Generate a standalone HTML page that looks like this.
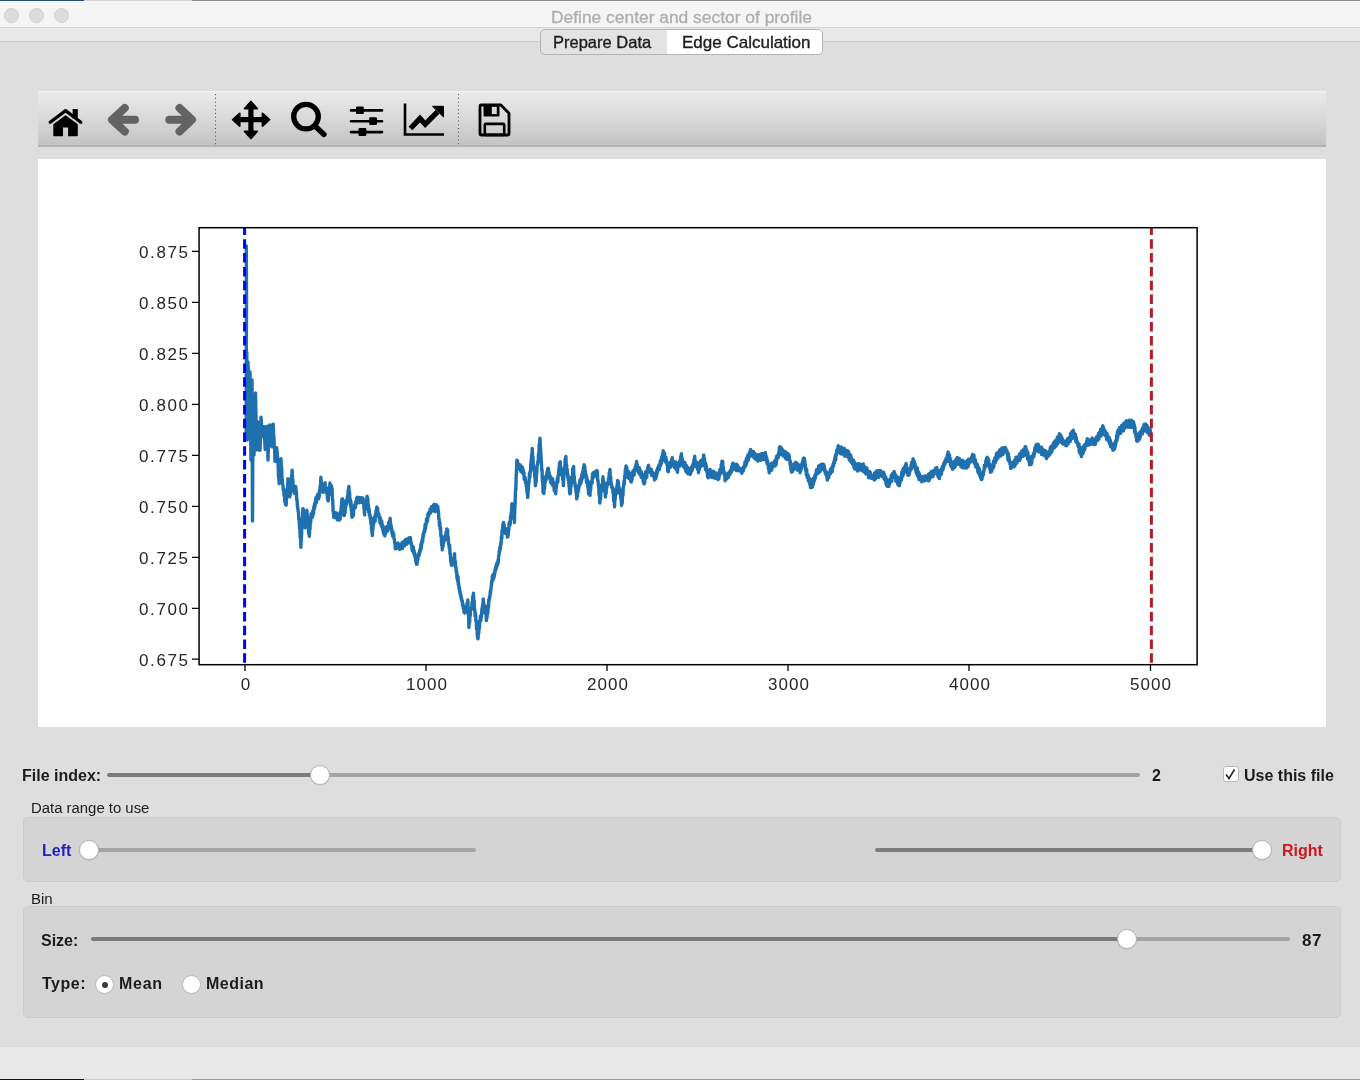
<!DOCTYPE html>
<html><head><meta charset="utf-8">
<style>
*{margin:0;padding:0;box-sizing:border-box}
html,body{width:1360px;height:1080px;overflow:hidden;background:#dedede;font-family:"Liberation Sans",sans-serif;color:#1c1c1c}
.abs{position:absolute}
.t{position:absolute;white-space:nowrap;line-height:1;will-change:transform}
#topstripe{left:0;top:0;width:1360px;height:1px;background:#8e8e8e}
#titlebar{left:0;top:1px;width:1360px;height:27px;background:#f5f5f5;border-bottom:1px solid #d3d3d3}
.light{position:absolute;top:8px;width:15px;height:15px;border-radius:50%;background:#dcdcdc;border:1px solid #cfcfcf}
#band{left:0;top:28px;width:1360px;height:14px;background:#e8e8e8;border-bottom:1px solid #cdcdcd}
#tabs{left:540px;top:29px;width:283px;height:26px;border:1px solid #b3b3b3;border-radius:5px;background:#e3e3e3;overflow:hidden}
#tabsel{position:absolute;left:126px;top:0;width:160px;height:26px;background:#fff}
#toolbar{left:38px;top:91px;width:1288px;height:56px;background:linear-gradient(#f6f6f6 0px,#eaeaea 2px,#d8d8d8 28px,#c3c3c3 54px);border-bottom:2px solid #b2b2b2}
.sep{position:absolute;top:3px;width:1px;height:50px;background:repeating-linear-gradient(#606060 0 1px,transparent 1px 3.75px)}
#canvas{left:38px;top:159px;width:1288px;height:568px;background:#fff}
.track{position:absolute;height:4px;border-radius:2px;background:#a4a4a4}
.trackd{position:absolute;height:4px;border-radius:2px;background:#7b7b7b}
.knob{position:absolute;width:20px;height:20px;border-radius:50%;background:#fff;border:1px solid #b5b5b5;box-shadow:0 0.5px 1px rgba(0,0,0,0.15)}
.group{position:absolute;background:#d4d4d4;border:1px solid #cbcbcb;border-radius:5px}
.lab{font-size:16px;font-weight:bold;color:#1c1c1c}
#status{left:0;top:1046px;width:1360px;height:33px;background:#e8e8e8;border-top:1px solid #d9d9d9}
#botstripe{left:0;top:1079px;width:1360px;height:1px;background:#9a9a9a}
.tick{font-size:17px;color:#262626;letter-spacing:1.1px}
.xt{transform:translateX(-50%)}
.yt{letter-spacing:1.6px}
</style></head><body>
<div id="topstripe" class="abs"><div class="abs" style="left:0;top:0;width:84px;height:2px;background:#23507d"></div><div class="abs" style="left:84px;top:0;width:108px;height:1px;background:#d4d4d4"></div></div>
<div id="titlebar" class="abs"></div>
<div class="light" style="left:4px"></div>
<div class="light" style="left:29px"></div>
<div class="light" style="left:54px"></div>
<div class="t" style="left:550.5px;top:8.5px;font-size:17.4px;color:#adadad;-webkit-text-stroke:0.3px #adadad">Define center and sector of profile</div>
<div id="band" class="abs"></div>
<div id="tabs" class="abs"><div id="tabsel"></div></div>
<div class="t" style="left:553px;top:34px;font-size:16.5px;color:#1c1c1c;-webkit-text-stroke:0.35px #1c1c1c">Prepare Data</div>
<div class="t" style="left:682px;top:34.4px;font-size:17px;color:#1c1c1c;-webkit-text-stroke:0.35px #1c1c1c">Edge Calculation</div>

<div id="toolbar" class="abs">
</div>
<svg class="abs" style="left:0;top:0" width="1360" height="160" viewBox="0 0 1360 160">
 <line x1="215.5" y1="94" x2="215.5" y2="144.5" stroke="#555" stroke-width="1" stroke-dasharray="1.1 2.68"/>
 <line x1="458.5" y1="94" x2="458.5" y2="144.5" stroke="#555" stroke-width="1" stroke-dasharray="1.1 2.68"/>
 <!-- home -->
 <path d="M50.2,122.2 L65.6,110.6 L80.8,122.2" fill="none" stroke="#000" stroke-width="3.3" stroke-linecap="round" stroke-linejoin="round"/>
 <rect x="72.6" y="109" width="5.2" height="9.5" fill="#000"/>
 <path d="M53.3,124.3 L65.6,115.2 L77.8,124.3 L77.8,135.2 Q77.8,136.2 76.8,136.2 L68.1,136.2 L68.1,127.6 L63,127.6 L63,136.2 L54.3,136.2 Q53.3,136.2 53.3,135.2 Z" fill="#000"/>
 <!-- back -->
 <path d="M124.8,108 L112,119.7 L124.8,131.5 M112.5,119.7 L135,119.7" fill="none" stroke="#636363" stroke-width="8" stroke-linecap="round" stroke-linejoin="round"/>
 <!-- forward -->
 <path d="M179.5,108 L192,119.7 L179.5,131.5 M191.5,119.7 L169.3,119.7" fill="none" stroke="#636363" stroke-width="8" stroke-linecap="round" stroke-linejoin="round"/>
 <!-- move -->
 <path d="M250.9,106 L250.9,134 M237,119.7 L265,119.7" stroke="#000" stroke-width="5.2" fill="none"/>
 <path d="M250.9,101.5 L257.2,108.5 L244.6,108.5 Z M250.9,138.3 L257.2,131.3 L244.6,131.3 Z M232.7,119.7 L239.7,113.4 L239.7,126 Z M269.5,119.7 L262.5,113.4 L262.5,126 Z" fill="#000" stroke="#000" stroke-width="1.8" stroke-linejoin="round"/>
 <!-- zoom -->
 <circle cx="306" cy="116.6" r="12.3" fill="none" stroke="#000" stroke-width="5.3"/>
 <path d="M315.5,126.5 L324,134.5" stroke="#000" stroke-width="5.3" stroke-linecap="round"/>
 <!-- sliders -->
 <path d="M351,110.4 H382 M351,121.2 H382 M351,132.1 H382" stroke="#000" stroke-width="2.6" stroke-linecap="round"/>
 <rect x="356" y="106.5" width="7.8" height="7.6" rx="1.2" fill="#000"/>
 <rect x="369.2" y="117.2" width="7.8" height="7.8" rx="1.2" fill="#000"/>
 <rect x="358.5" y="128" width="7.8" height="8" rx="1.2" fill="#000"/>
 <!-- edit axis -->
 <path d="M405,103.4 V134.5 H444" fill="none" stroke="#000" stroke-width="2.6"/>
 <path d="M410.5,128.5 L420,118.5 L425.2,124.2 L437.5,111.8" fill="none" stroke="#000" stroke-width="5.3" stroke-linejoin="miter"/>
 <path d="M432.5,106.3 L443.5,106.3 L443.5,117 Z" fill="#000" stroke="#000" stroke-width="1" stroke-linejoin="round"/>
 <!-- save -->
 <path d="M481,105 H500.8 L509,113.2 V133.5 Q509,135 507.5,135 H481.5 Q480,135 480,133.5 V106.5 Q480,105 481.5,105 Z" fill="none" stroke="#000" stroke-width="2.8" stroke-linejoin="round"/>
 <rect x="483.5" y="104.5" width="16" height="12" rx="1" fill="#000"/>
 <rect x="491.8" y="106.8" width="5" height="7.3" fill="#d8d8d8"/>
 <rect x="484.8" y="123.9" width="19.4" height="11" rx="1" fill="none" stroke="#000" stroke-width="2.6"/>
</svg>

<div id="canvas" class="abs"></div>
<svg class="abs" style="left:0;top:0" width="1360" height="740" viewBox="0 0 1360 740">
 <defs><clipPath id="clip"><rect x="199" y="227" width="998" height="437"/></clipPath></defs>
 <g clip-path="url(#clip)">
  <path d="M246.30,246.0 246.50,300.0 246.30,350.0 246.20,437.0 246.80,352.0 247.30,440.0 248.00,362.0 249.00,395.0 250.00,372.0 251.00,460.0 252.00,380.0 252.50,521.0 253.00,400.0 254.00,455.0 255.50,393.0 256.10,423.1 256.45,430.2 256.80,449.9 257.15,449.9 257.50,437.7 257.85,422.1 258.20,423.7 258.55,427.1 258.90,432.6 259.25,435.0 259.60,447.1 259.95,450.2 260.30,442.3 260.65,427.4 261.00,417.2 261.35,421.6 261.70,436.1 262.05,434.1 262.40,436.3 262.75,432.3 263.10,434.7 263.45,426.6 263.80,426.6 264.15,426.6 264.50,439.2 264.85,443.1 265.20,449.5 265.55,440.3 265.90,438.8 266.25,433.3 266.60,434.6 266.95,426.3 267.30,437.6 267.65,442.0 268.00,460.0 268.35,447.8 268.70,445.8 269.05,435.8 269.40,436.3 269.75,425.0 270.10,425.9 270.45,426.7 270.80,437.8 271.15,436.3 271.50,445.8 271.85,446.7 272.20,445.3 272.55,435.2 272.90,424.3 273.25,424.3 273.60,434.3 273.95,438.1 274.30,446.8 274.65,450.0 275.00,461.2 275.35,453.3 275.70,456.6 276.05,451.6 276.40,453.9 276.75,447.8 277.10,452.4 277.45,456.1 277.80,461.6 278.15,464.9 278.50,476.0 278.85,478.7 279.20,483.6 279.55,473.7 279.90,472.9 280.25,469.3 280.60,466.9 280.95,458.6 281.30,465.7 281.65,467.7 282.00,478.5 282.35,480.0 282.70,484.9 283.05,485.6 283.40,490.9 283.75,489.4 284.10,495.9 284.45,494.9 284.80,501.8 285.15,499.3 285.50,504.6 285.85,503.8 286.20,505.1 286.55,497.0 286.90,494.4 287.25,488.5 287.60,489.1 287.95,478.8 288.30,487.3 288.65,484.9 289.00,492.5 289.35,487.3 289.70,496.9 290.05,495.2 290.40,492.8 290.75,486.3 291.10,486.4 291.45,477.4 291.80,475.3 292.15,470.2 292.50,478.9 292.85,480.1 293.20,486.9 293.55,487.2 293.90,492.5 294.25,490.3 294.60,493.2 294.95,489.4 295.30,491.8 295.65,486.5 296.00,489.2 296.35,491.0 296.70,499.7 297.05,499.6 297.40,506.2 297.75,507.4 298.10,511.4 298.45,511.8 298.80,519.5 299.15,518.6 299.50,527.2 299.85,529.0 300.20,537.6 300.55,536.5 300.90,547.4 301.25,539.0 301.60,534.4 301.95,521.8 302.30,522.7 302.65,513.0 303.00,508.7 303.35,509.4 303.70,519.7 304.05,518.8 304.40,525.0 304.75,524.0 305.10,527.8 305.45,521.5 305.80,524.7 306.15,517.1 306.50,517.2 306.85,510.2 307.20,515.6 307.55,517.4 307.90,522.6 308.25,522.2 308.60,532.6 308.95,533.7 309.30,536.3 309.65,529.8 310.00,529.1 310.35,520.7 310.70,522.4 311.05,513.7 311.40,516.3 311.75,513.7 312.10,517.6 312.45,511.9 312.80,515.9 313.15,509.6 313.50,513.6 313.85,506.6 314.20,509.6 314.55,503.9 314.90,506.9 315.25,501.5 315.60,503.9 315.95,497.6 316.30,502.8 316.65,497.4 317.00,498.6 317.35,494.9 317.70,499.1 318.05,494.0 318.40,499.0 318.75,495.4 319.10,497.6 319.45,490.5 319.80,493.2 320.15,485.9 320.50,487.8 320.85,477.2 321.20,481.5 321.55,483.1 321.90,490.4 322.25,487.8 322.60,490.8 322.95,490.2 323.30,492.4 323.65,488.9 324.00,491.7 324.35,485.2 324.70,487.6 325.05,482.6 325.40,488.9 325.75,487.2 326.10,491.3 326.45,487.6 326.80,493.6 327.15,492.1 327.50,499.2 327.85,499.0 328.20,501.0 328.55,493.7 328.90,495.1 329.25,490.0 329.60,490.2 329.95,483.0 330.30,488.6 330.65,485.3 331.00,489.1 331.35,485.7 331.70,491.8 332.05,488.3 332.40,498.3 332.75,501.1 333.10,511.2 333.45,512.7 333.80,517.4 334.15,512.8 334.50,517.5 334.85,514.1 335.20,517.5 335.55,512.6 335.90,517.0 336.25,515.1 336.60,516.7 336.95,513.3 337.30,519.8 337.65,515.3 338.00,517.9 338.35,515.7 338.70,519.1 339.05,515.1 339.40,520.0 339.75,516.1 340.10,519.2 340.45,511.6 340.80,516.0 341.15,506.5 341.50,508.4 341.85,499.2 342.20,499.4 342.55,498.9 342.90,506.0 343.25,506.7 343.60,510.8 343.95,508.0 344.30,515.6 344.65,511.8 345.00,513.0 345.35,508.0 345.70,507.1 346.05,500.7 346.40,504.7 346.75,499.7 347.10,502.5 347.45,496.3 347.80,498.5 348.15,490.2 348.50,490.9 348.85,486.4 349.20,493.5 349.55,492.4 349.90,500.7 350.25,499.4 350.60,506.5 350.95,501.8 351.30,510.5 351.65,511.1 352.00,517.2 352.35,514.2 352.70,516.3 353.05,511.5 353.40,515.2 353.75,509.2 354.10,509.2 354.45,505.1 354.80,507.0 355.15,503.8 355.50,507.3 355.85,501.7 356.20,504.0 356.55,498.1 356.90,501.2 357.25,497.3 357.60,502.0 357.95,497.9 358.30,501.0 358.65,498.6 359.00,502.5 359.35,497.5 359.70,502.9 360.05,499.4 360.40,502.2 360.75,498.2 361.10,501.1 361.45,497.6 361.80,502.2 362.15,499.3 362.50,501.7 362.85,498.1 363.20,501.2 363.55,499.7 363.90,506.8 364.25,510.1 364.60,514.9 364.95,507.2 365.30,509.6 365.65,501.3 366.00,506.0 366.35,501.7 366.70,501.1 367.05,496.1 367.40,500.0 367.75,498.1 368.10,505.0 368.45,505.1 368.80,512.4 369.15,509.2 369.50,515.4 369.85,514.1 370.20,518.7 370.55,517.0 370.90,523.6 371.25,522.5 371.60,530.5 371.95,530.1 372.30,535.5 372.65,526.5 373.00,529.0 373.35,523.0 373.70,523.8 374.05,517.8 374.40,519.6 374.75,516.5 375.10,521.3 375.45,513.8 375.80,516.3 376.15,509.9 376.50,511.6 376.85,506.9 377.20,510.4 377.55,508.2 377.90,513.7 378.25,513.0 378.60,516.1 378.95,514.1 379.30,519.0 379.65,518.4 380.00,523.0 380.35,517.7 380.70,522.8 381.05,521.0 381.40,525.9 381.75,521.0 382.10,527.5 382.45,524.6 382.80,530.2 383.15,526.3 383.50,533.2 383.85,531.9 384.20,534.9 384.55,532.3 384.90,535.9 385.25,529.7 385.60,533.5 385.95,528.2 386.30,529.9 386.65,526.8 387.00,529.7 387.35,526.8 387.70,531.1 388.05,526.5 388.40,527.3 388.75,522.4 389.10,525.4 389.45,521.0 389.80,524.6 390.15,518.3 390.50,524.5 390.85,524.4 391.20,529.4 391.55,527.3 391.90,533.0 392.25,530.7 392.60,536.1 392.95,531.6 393.30,536.5 393.65,533.8 394.00,538.8 394.35,539.4 394.70,542.8 395.05,543.3 395.40,548.9 395.75,545.6 396.10,548.9 396.45,544.9 396.80,547.5 397.15,545.5 397.50,547.0 397.85,542.9 398.20,547.8 398.55,544.8 398.90,548.0 399.25,544.2 399.60,549.5 399.95,545.3 400.30,548.7 400.65,544.9 401.00,548.5 401.35,543.9 401.70,548.0 402.05,542.5 402.40,548.6 402.75,544.4 403.10,546.4 403.45,543.8 403.80,545.7 404.15,541.0 404.50,545.9 404.85,540.9 405.20,543.4 405.55,539.5 405.90,544.3 406.25,540.4 406.60,544.3 406.95,540.8 407.30,542.4 407.65,538.6 408.00,542.1 408.35,540.7 408.70,542.9 409.05,537.7 409.40,541.7 409.75,538.2 410.10,540.1 410.45,537.8 410.80,543.4 411.15,542.4 411.50,545.6 411.85,545.3 412.20,550.6 412.55,547.5 412.90,551.1 413.25,546.6 413.60,553.0 413.95,549.9 414.30,554.5 414.65,552.8 415.00,557.2 415.35,555.6 415.70,561.4 416.05,557.0 416.40,564.2 416.75,561.1 417.10,564.1 417.45,556.5 417.80,560.0 418.15,555.0 418.50,556.6 418.85,553.3 419.20,555.3 419.55,550.7 419.90,552.6 420.25,548.4 420.60,550.4 420.95,543.9 421.30,548.4 421.65,541.9 422.00,543.6 422.35,538.6 422.70,541.2 423.05,534.2 423.40,536.3 423.75,532.4 424.10,532.9 424.45,529.4 424.80,531.7 425.15,524.1 425.50,528.8 425.85,523.4 426.20,524.6 426.55,518.7 426.90,522.4 427.25,517.7 427.60,520.8 427.95,513.9 428.30,516.8 428.65,512.9 429.00,514.7 429.35,511.6 429.70,513.5 430.05,509.3 430.40,513.2 430.75,508.6 431.10,510.7 431.45,506.8 431.80,509.9 432.15,507.5 432.50,511.1 432.85,506.3 433.20,507.9 433.55,504.9 433.90,507.3 434.25,504.1 434.60,507.9 434.95,507.1 435.30,511.5 435.65,506.1 436.00,511.1 436.35,504.6 436.70,510.2 437.05,506.9 437.40,509.7 437.75,506.4 438.10,510.8 438.45,511.1 438.80,519.1 439.15,518.8 439.50,525.8 439.85,522.2 440.20,529.5 440.55,527.5 440.90,536.5 441.25,535.3 441.60,544.9 441.95,543.5 442.30,549.9 442.65,544.4 443.00,546.9 443.35,541.7 443.70,542.8 444.05,537.0 444.40,539.0 444.75,537.2 445.10,540.1 445.45,535.1 445.80,539.3 446.15,531.6 446.50,535.4 446.85,528.9 447.20,530.1 447.55,529.9 447.90,538.3 448.25,537.4 448.60,544.2 448.95,544.2 449.30,548.4 449.65,545.1 450.00,554.5 450.35,553.4 450.70,561.3 451.05,561.2 451.40,565.1 451.75,562.8 452.10,565.2 452.45,561.1 452.80,561.3 453.15,558.6 453.50,562.2 453.85,558.8 454.20,558.7 454.55,553.8 454.90,562.6 455.25,561.0 455.60,566.6 455.95,567.4 456.30,572.8 456.65,571.4 457.00,578.5 457.35,575.1 457.70,581.3 458.05,577.0 458.40,585.2 458.75,583.5 459.10,589.0 459.45,587.9 459.80,592.7 460.15,591.6 460.50,595.8 460.85,594.7 461.20,599.2 461.55,598.0 461.90,601.3 462.25,600.7 462.60,605.9 462.95,603.8 463.30,608.4 463.65,607.3 464.00,612.3 464.35,611.9 464.70,613.0 465.05,607.0 465.40,610.6 465.75,607.3 466.10,612.2 466.45,607.0 466.80,606.9 467.15,602.6 467.50,604.3 467.85,600.0 468.20,612.4 468.55,615.6 468.90,627.5 469.25,622.2 469.60,622.8 469.95,614.7 470.30,615.5 470.65,608.1 471.00,609.0 471.35,607.7 471.70,609.2 472.05,602.1 472.40,604.8 472.75,596.6 473.10,596.4 473.45,593.3 473.80,600.1 474.15,600.6 474.50,608.9 474.85,610.6 475.20,616.3 475.55,613.8 475.90,621.0 476.25,620.8 476.60,629.2 476.95,626.8 477.30,635.3 477.65,637.1 478.00,638.8 478.35,633.3 478.70,633.3 479.05,628.4 479.40,627.9 479.75,620.7 480.10,621.5 480.45,615.9 480.80,620.8 481.15,615.2 481.50,617.0 481.85,609.0 482.20,610.4 482.55,605.3 482.90,605.7 483.25,598.9 483.60,604.1 483.95,603.8 484.30,608.5 484.65,608.2 485.00,613.2 485.35,606.8 485.70,614.0 486.05,611.5 486.40,620.6 486.75,617.6 487.10,616.9 487.45,610.2 487.80,613.4 488.15,604.8 488.50,607.5 488.85,599.4 489.20,600.3 489.55,596.4 489.90,597.4 490.25,591.3 490.60,592.7 490.95,588.0 491.30,586.6 491.65,581.0 492.00,582.3 492.35,576.0 492.70,580.6 493.05,574.5 493.40,578.8 493.75,573.6 494.10,577.3 494.45,573.7 494.80,573.6 495.15,568.9 495.50,570.8 495.85,566.4 496.20,568.9 496.55,563.7 496.90,566.6 497.25,563.6 497.60,565.2 497.95,560.3 498.30,562.3 498.65,555.9 499.00,555.1 499.35,550.1 499.70,551.6 500.05,546.3 500.40,549.2 500.75,543.1 501.10,543.8 501.45,536.1 501.80,538.7 502.15,529.9 502.50,532.7 502.85,524.3 503.20,524.1 503.55,522.4 503.90,528.0 504.25,525.4 504.60,530.9 504.95,529.2 505.30,533.4 505.65,528.5 506.00,532.5 506.35,530.1 506.70,533.9 507.05,531.2 507.40,537.1 507.75,535.2 508.10,536.2 508.45,530.9 508.80,530.1 509.15,522.6 509.50,525.8 509.85,521.5 510.20,524.5 510.55,516.3 510.90,518.9 511.25,512.4 511.60,511.1 511.95,503.8 512.30,507.1 512.65,505.6 513.00,509.1 513.35,506.9 513.70,513.9 514.05,513.1 514.40,522.5 514.75,508.8 515.10,503.1 515.45,490.6 515.80,490.1 516.15,475.9 516.50,470.8 516.85,460.1 517.20,464.0 517.55,460.8 517.90,465.2 518.25,463.9 518.60,467.1 518.95,464.5 519.30,468.6 519.65,465.6 520.00,469.5 520.35,464.9 520.70,471.3 521.05,466.3 521.40,469.7 521.75,467.0 522.10,472.4 522.45,467.3 522.80,473.1 523.15,469.6 523.50,474.3 523.85,472.5 524.20,479.3 524.55,476.9 524.90,479.5 525.25,477.7 525.60,482.9 525.95,481.6 526.30,486.4 526.65,485.7 527.00,492.4 527.35,490.7 527.70,497.4 528.05,491.4 528.40,488.8 528.75,481.5 529.10,482.1 529.45,473.2 529.80,477.7 530.15,471.2 530.50,472.0 530.85,462.7 531.20,463.0 531.55,455.0 531.90,456.3 532.25,448.5 532.60,456.1 532.95,456.8 533.30,465.4 533.65,466.7 534.00,470.2 534.35,470.0 534.70,476.6 535.05,477.6 535.40,485.8 535.75,482.2 536.10,482.4 536.45,475.3 536.80,473.1 537.15,464.8 537.50,464.9 537.85,461.3 538.20,462.2 538.55,453.7 538.90,454.1 539.25,444.1 539.60,443.7 539.95,438.1 540.30,444.7 540.65,449.5 541.00,457.7 541.35,460.4 541.70,470.4 542.05,469.6 542.40,481.2 542.75,482.8 543.10,492.5 543.45,492.7 543.80,493.4 544.15,487.8 544.50,488.7 544.85,482.7 545.20,482.7 545.55,476.5 545.90,480.6 546.25,476.0 546.60,478.5 546.95,472.2 547.30,474.4 547.65,468.8 548.00,471.4 548.35,468.3 548.70,475.3 549.05,472.7 549.40,476.9 549.75,474.9 550.10,479.6 550.45,476.6 550.80,482.8 551.15,479.4 551.50,483.5 551.85,478.1 552.20,482.6 552.55,478.6 552.90,485.9 553.25,481.6 553.60,486.3 553.95,485.0 554.30,490.8 554.65,487.2 555.00,491.3 555.35,489.2 555.70,493.7 556.05,487.9 556.40,487.5 556.75,482.2 557.10,481.5 557.45,478.3 557.80,482.1 558.15,475.5 558.50,474.9 558.85,469.0 559.20,469.2 559.55,462.9 559.90,464.5 560.25,461.7 560.60,469.2 560.95,467.2 561.30,475.0 561.65,469.1 562.00,473.3 562.35,472.7 562.70,479.7 563.05,479.1 563.40,485.6 563.75,476.3 564.10,473.8 564.45,468.5 564.80,470.7 565.15,459.6 565.50,459.4 565.85,456.4 566.20,464.9 566.55,464.7 566.90,472.4 567.25,469.7 567.60,477.4 567.95,474.7 568.30,480.5 568.65,479.0 569.00,485.7 569.35,487.8 569.70,493.2 570.05,493.8 570.40,492.9 570.75,484.8 571.10,486.1 571.45,477.3 571.80,483.1 572.15,477.0 572.50,476.1 572.85,468.4 573.20,470.6 573.55,466.4 573.90,476.6 574.25,476.3 574.60,483.0 574.95,482.5 575.30,487.5 575.65,485.6 576.00,492.4 576.35,491.3 576.70,498.9 577.05,494.7 577.40,496.3 577.75,491.5 578.10,491.9 578.45,488.1 578.80,488.4 579.15,484.0 579.50,485.8 579.85,480.0 580.20,484.5 580.55,479.6 580.90,483.3 581.25,477.5 581.60,480.7 581.95,474.2 582.30,478.5 582.65,471.6 583.00,475.1 583.35,467.8 583.70,470.0 584.05,464.8 584.40,467.3 584.75,466.1 585.10,473.3 585.45,471.1 585.80,477.6 586.15,474.9 586.50,482.4 586.85,477.4 587.20,482.8 587.55,480.2 587.90,487.7 588.25,486.3 588.60,493.8 588.95,492.0 589.30,494.2 589.65,492.3 590.00,495.3 590.35,487.5 590.70,489.7 591.05,481.4 591.40,483.9 591.75,480.4 592.10,483.3 592.45,473.9 592.80,476.4 593.15,472.6 593.50,477.3 593.85,473.9 594.20,476.2 594.55,471.9 594.90,475.4 595.25,471.9 595.60,476.0 595.95,471.7 596.30,474.6 596.65,470.5 597.00,475.3 597.35,471.2 597.70,480.8 598.05,480.5 598.40,485.3 598.75,485.8 599.10,495.5 599.45,495.3 599.80,503.0 600.15,499.0 600.50,499.2 600.85,490.9 601.20,492.2 601.55,484.8 601.90,489.2 602.25,485.2 602.60,484.1 602.95,476.8 603.30,480.5 603.65,481.0 604.00,488.8 604.35,486.0 604.70,491.5 605.05,492.0 605.40,497.0 605.75,490.6 606.10,493.7 606.45,486.8 606.80,487.4 607.15,482.9 607.50,484.2 607.85,482.5 608.20,484.5 608.55,478.1 608.90,479.8 609.25,472.6 609.60,476.9 609.95,469.4 610.30,477.9 610.65,476.6 611.00,483.6 611.35,483.2 611.70,487.3 612.05,486.6 612.40,488.7 612.75,487.5 613.10,493.6 613.45,494.3 613.80,501.1 614.15,498.8 614.50,506.8 614.85,500.2 615.20,499.0 615.55,493.0 615.90,494.6 616.25,488.7 616.60,493.0 616.95,486.4 617.30,485.0 617.65,480.4 618.00,482.4 618.35,481.8 618.70,487.4 619.05,486.8 619.40,493.2 619.75,489.2 620.10,493.8 620.45,491.7 620.80,498.3 621.15,497.6 621.50,505.5 621.85,503.6 622.20,503.4 622.55,494.1 622.90,495.7 623.25,487.1 623.60,486.4 623.95,481.3 624.30,484.3 624.65,475.9 625.00,477.3 625.35,469.4 625.70,469.0 626.05,465.9 626.40,472.2 626.75,467.1 627.10,473.4 627.45,471.4 627.80,477.4 628.15,472.3 628.50,478.2 628.85,471.8 629.20,477.8 629.55,473.5 629.90,478.2 630.25,477.3 630.60,481.1 630.95,479.5 631.30,482.1 631.65,475.7 632.00,479.8 632.35,472.5 632.70,474.8 633.05,471.0 633.40,474.3 633.75,470.1 634.10,475.1 634.45,469.2 634.80,471.5 635.15,467.3 635.50,469.3 635.85,464.9 636.20,466.0 636.55,461.4 636.90,468.7 637.25,464.4 637.60,469.7 637.95,467.2 638.30,471.9 638.65,468.4 639.00,473.0 639.35,467.8 639.70,474.4 640.05,471.3 640.40,473.8 640.75,470.8 641.10,477.2 641.45,472.1 641.80,477.7 642.15,474.4 642.50,478.0 642.85,474.5 643.20,481.9 643.55,478.1 643.90,483.9 644.25,479.7 644.60,483.3 644.95,476.4 645.30,479.2 645.65,471.6 646.00,476.1 646.35,471.5 646.70,477.3 647.05,472.0 647.40,472.0 647.75,467.3 648.10,469.1 648.45,465.2 648.80,471.2 649.15,467.8 649.50,471.2 649.85,469.9 650.20,472.6 650.55,470.0 650.90,473.0 651.25,469.2 651.60,475.2 651.95,471.9 652.30,475.7 652.65,472.2 653.00,475.3 653.35,473.1 653.70,476.1 654.05,473.9 654.40,480.0 654.75,477.0 655.10,478.7 655.45,474.6 655.80,478.7 656.15,472.8 656.50,476.3 656.85,470.2 657.20,473.3 657.55,468.0 657.90,471.0 658.25,467.0 658.60,468.7 658.95,465.0 659.30,469.4 659.65,464.3 660.00,464.8 660.35,461.0 660.70,465.5 661.05,459.5 661.40,463.3 661.75,457.0 662.10,460.2 662.45,454.1 662.80,456.4 663.15,450.6 663.50,453.4 663.85,451.8 664.20,455.8 664.55,453.1 664.90,460.9 665.25,458.2 665.60,462.0 665.95,457.3 666.30,461.7 666.65,461.2 667.00,464.9 667.35,463.6 667.70,471.1 668.05,469.0 668.40,471.7 668.75,464.9 669.10,467.3 669.45,462.8 669.80,465.7 670.15,463.2 670.50,467.4 670.85,463.5 671.20,464.3 671.55,459.5 671.90,462.6 672.25,457.5 672.60,463.7 672.95,461.6 673.30,465.2 673.65,461.1 674.00,466.5 674.35,463.9 674.70,467.9 675.05,463.9 675.40,466.2 675.75,461.9 676.10,469.3 676.45,466.5 676.80,469.2 677.15,467.5 677.50,472.2 677.85,465.0 678.20,467.2 678.55,462.6 678.90,465.3 679.25,462.1 679.60,466.1 679.95,460.6 680.30,462.6 680.65,456.4 681.00,458.7 681.35,453.8 681.70,460.3 682.05,457.6 682.40,461.2 682.75,461.5 683.10,466.4 683.45,461.4 683.80,467.1 684.15,464.2 684.50,466.4 684.85,462.4 685.20,469.3 685.55,466.1 685.90,471.5 686.25,465.2 686.60,470.1 686.95,466.9 687.30,472.8 687.65,467.3 688.00,473.7 688.35,467.9 688.70,471.7 689.05,469.9 689.40,472.8 689.75,469.7 690.10,474.5 690.45,469.4 690.80,473.1 691.15,469.3 691.50,469.0 691.85,466.6 692.20,470.5 692.55,464.9 692.90,468.1 693.25,463.0 693.60,465.8 693.95,460.2 694.30,460.5 694.65,456.1 695.00,462.4 695.35,461.0 695.70,465.2 696.05,463.9 696.40,466.9 696.75,462.3 697.10,466.9 697.45,464.1 697.80,469.8 698.15,467.4 698.50,472.6 698.85,467.6 699.20,470.1 699.55,464.3 699.90,467.5 700.25,461.1 700.60,466.6 700.95,460.5 701.30,465.2 701.65,460.9 702.00,465.8 702.35,461.2 702.70,461.5 703.05,458.5 703.40,460.3 703.75,454.9 704.10,462.0 704.45,458.1 704.80,466.2 705.15,462.1 705.50,469.7 705.85,463.7 706.20,470.0 706.55,467.1 706.90,472.3 707.25,470.4 707.60,476.8 707.95,473.9 708.30,477.9 708.65,472.9 709.00,475.5 709.35,472.2 709.70,475.8 710.05,469.5 710.40,476.3 710.75,472.3 711.10,475.2 711.45,470.9 711.80,477.3 712.15,473.6 712.50,475.8 712.85,472.7 713.20,476.2 713.55,471.1 713.90,478.0 714.25,472.4 714.60,477.1 714.95,473.8 715.30,477.7 715.65,473.5 716.00,478.4 716.35,473.0 716.70,477.5 717.05,473.1 717.40,478.5 717.75,476.6 718.10,479.5 718.45,476.0 718.80,479.1 719.15,473.2 719.50,476.0 719.85,469.5 720.20,473.9 720.55,471.3 720.90,473.1 721.25,464.7 721.60,468.0 721.95,461.2 722.30,462.3 722.65,461.4 723.00,467.1 723.35,468.5 723.70,473.0 724.05,471.1 724.40,475.3 724.75,474.3 725.10,480.7 725.45,477.1 725.80,478.8 726.15,476.4 726.50,479.1 726.85,474.1 727.20,477.7 727.55,473.3 727.90,477.7 728.25,474.9 728.60,477.0 728.95,472.8 729.30,474.8 729.65,471.7 730.00,474.3 730.35,470.3 730.70,473.4 731.05,470.5 731.40,471.7 731.75,466.5 732.10,470.5 732.45,463.8 732.80,468.8 733.15,463.2 733.50,469.0 733.85,464.6 734.20,468.2 734.55,464.4 734.90,468.8 735.25,465.9 735.60,469.1 735.95,465.5 736.30,470.6 736.65,464.3 737.00,470.3 737.35,464.9 737.70,469.6 738.05,467.4 738.40,470.5 738.75,467.1 739.10,470.1 739.45,468.9 739.80,471.0 740.15,469.0 740.50,471.1 740.85,469.0 741.20,471.7 741.55,469.0 741.90,473.3 742.25,468.6 742.60,471.7 742.95,467.6 743.30,471.1 743.65,466.7 744.00,468.7 744.35,465.2 744.70,465.9 745.05,461.6 745.40,466.3 745.75,461.2 746.10,465.1 746.45,458.2 746.80,462.8 747.15,458.0 747.50,459.5 747.85,455.0 748.20,460.4 748.55,455.9 748.90,457.5 749.25,453.3 749.60,456.7 749.95,450.9 750.30,453.0 750.65,449.5 751.00,454.5 751.35,452.8 751.70,454.8 752.05,453.1 752.40,455.9 752.75,452.9 753.10,456.8 753.45,451.5 753.80,455.7 754.15,454.4 754.50,458.0 754.85,453.2 755.20,459.0 755.55,455.4 755.90,459.1 756.25,455.5 756.60,458.1 756.95,455.6 757.30,460.4 757.65,454.7 758.00,461.1 758.35,456.7 758.70,459.5 759.05,456.6 759.40,458.7 759.75,454.6 760.10,458.2 760.45,454.1 760.80,460.3 761.15,455.1 761.50,459.0 761.85,453.4 762.20,459.3 762.55,453.9 762.90,459.5 763.25,456.3 763.60,459.6 763.95,453.8 764.30,457.4 764.65,454.8 765.00,456.6 765.35,452.5 765.70,457.7 766.05,455.8 766.40,461.5 766.75,457.9 767.10,464.0 767.45,460.6 767.80,464.2 768.15,463.2 768.50,469.1 768.85,467.8 769.20,472.8 769.55,466.3 769.90,470.5 770.25,466.6 770.60,468.6 770.95,465.2 771.30,470.3 771.65,463.3 772.00,469.1 772.35,463.6 772.70,466.8 773.05,463.4 773.40,465.7 773.75,462.4 774.10,464.3 774.45,461.2 774.80,466.0 775.15,460.8 775.50,465.5 775.85,459.2 776.20,464.4 776.55,456.2 776.90,459.9 777.25,455.9 777.60,457.9 777.95,454.6 778.30,457.5 778.65,452.8 779.00,454.8 779.35,447.5 779.70,452.0 780.05,446.7 780.40,450.9 780.75,447.1 781.10,453.7 781.45,448.3 781.80,454.8 782.15,449.1 782.50,454.4 782.85,451.5 783.20,455.8 783.55,451.1 783.90,456.0 784.25,451.2 784.60,454.9 784.95,451.9 785.30,458.1 785.65,452.0 786.00,456.0 786.35,453.0 786.70,459.3 787.05,455.4 787.40,456.9 787.75,453.4 788.10,459.5 788.45,454.2 788.80,459.3 789.15,455.5 789.50,459.9 789.85,459.9 790.20,465.5 790.55,461.7 790.90,469.7 791.25,468.7 791.60,472.1 791.95,467.7 792.30,471.9 792.65,468.2 793.00,470.1 793.35,464.4 793.70,469.5 794.05,465.6 794.40,467.1 794.75,464.4 795.10,468.2 795.45,462.2 795.80,466.8 796.15,464.5 796.50,467.2 796.85,462.9 797.20,470.0 797.55,465.0 797.90,469.1 798.25,464.3 798.60,470.2 798.95,467.5 799.30,470.5 799.65,467.7 800.00,472.7 800.35,466.2 800.70,471.0 801.05,465.2 801.40,468.9 801.75,464.0 802.10,466.5 802.45,462.0 802.80,464.3 803.15,458.8 803.50,462.4 803.85,458.0 804.20,462.0 804.55,458.6 804.90,465.4 805.25,464.2 805.60,470.7 805.95,468.1 806.30,474.6 806.65,469.6 807.00,477.1 807.35,474.1 807.70,478.0 808.05,474.9 808.40,480.8 808.75,477.2 809.10,481.8 809.45,478.6 809.80,484.5 810.15,479.2 810.50,487.6 810.85,482.2 811.20,486.7 811.55,484.5 811.90,487.5 812.25,480.9 812.60,486.7 812.95,478.7 813.30,484.4 813.65,478.2 814.00,481.8 814.35,476.9 814.70,479.8 815.05,474.6 815.40,477.9 815.75,473.8 816.10,474.5 816.45,469.8 816.80,473.7 817.15,469.4 817.50,473.7 817.85,469.1 818.20,473.3 818.55,466.0 818.90,469.8 819.25,465.6 819.60,471.9 819.95,467.4 820.30,471.4 820.65,464.7 821.00,469.0 821.35,466.5 821.70,468.9 822.05,464.2 822.40,468.5 822.75,466.4 823.10,468.0 823.45,464.3 823.80,469.7 824.15,465.5 824.50,470.8 824.85,468.9 825.20,472.8 825.55,471.4 825.90,474.6 826.25,471.8 826.60,476.4 826.95,474.2 827.30,480.1 827.65,474.7 828.00,477.2 828.35,474.5 828.70,477.8 829.05,472.9 829.40,474.7 829.75,472.2 830.10,474.2 830.45,469.1 830.80,473.2 831.15,469.0 831.50,470.8 831.85,467.4 832.20,471.7 832.55,466.2 832.90,466.7 833.25,463.8 833.60,466.0 833.95,461.7 834.30,462.9 834.65,458.5 835.00,460.9 835.35,455.8 835.70,460.0 836.05,453.9 836.40,455.5 836.75,450.0 837.10,453.4 837.45,449.8 837.80,450.4 838.15,445.7 838.50,452.4 838.85,447.1 839.20,450.8 839.55,446.8 839.90,451.0 840.25,447.5 840.60,453.9 840.95,448.6 841.30,452.1 841.65,447.2 842.00,451.9 842.35,449.8 842.70,454.1 843.05,448.9 843.40,453.0 843.75,450.4 844.10,454.0 844.45,448.4 844.80,456.2 845.15,451.6 845.50,456.1 845.85,450.9 846.20,454.4 846.55,451.1 846.90,454.0 847.25,450.4 847.60,456.5 847.95,452.3 848.30,454.7 848.65,451.6 849.00,459.1 849.35,454.8 849.70,460.3 850.05,454.7 850.40,459.1 850.75,455.3 851.10,462.1 851.45,457.9 851.80,462.8 852.15,459.6 852.50,464.1 852.85,460.9 853.20,464.6 853.55,460.2 853.90,467.3 854.25,461.9 854.60,468.9 854.95,462.8 855.30,469.1 855.65,464.3 856.00,468.1 856.35,466.4 856.70,468.5 857.05,464.0 857.40,471.0 857.75,465.8 858.10,470.9 858.45,463.8 858.80,468.2 859.15,464.7 859.50,468.6 859.85,464.0 860.20,468.9 860.55,465.2 860.90,469.6 861.25,465.5 861.60,470.3 861.95,464.5 862.30,467.9 862.65,464.6 863.00,469.3 863.35,464.0 863.70,471.8 864.05,467.6 864.40,472.0 864.75,466.6 865.10,471.9 865.45,469.1 865.80,474.0 866.15,468.1 866.50,473.9 866.85,467.9 867.20,473.1 867.55,470.6 867.90,473.6 868.25,471.8 868.60,477.6 868.95,472.3 869.30,477.8 869.65,471.5 870.00,477.7 870.35,472.4 870.70,477.4 871.05,475.7 871.40,478.2 871.75,476.4 872.10,478.2 872.45,476.3 872.80,477.7 873.15,475.7 873.50,478.9 873.85,474.8 874.20,480.0 874.55,473.3 874.90,479.5 875.25,472.6 875.60,479.0 875.95,471.5 876.30,476.9 876.65,473.5 877.00,475.6 877.35,470.7 877.70,475.8 878.05,470.6 878.40,477.4 878.75,471.1 879.10,475.1 879.45,470.8 879.80,475.3 880.15,471.1 880.50,475.1 880.85,470.7 881.20,475.2 881.55,473.3 881.90,476.5 882.25,473.2 882.60,475.4 882.95,472.6 883.30,475.2 883.65,472.2 884.00,478.6 884.35,474.2 884.70,479.7 885.05,476.6 885.40,481.0 885.75,477.0 886.10,484.2 886.45,479.0 886.80,486.0 887.15,481.0 887.50,486.4 887.85,481.6 888.20,485.1 888.55,480.2 888.90,486.3 889.25,481.4 889.60,484.5 889.95,479.2 890.30,481.7 890.65,478.6 891.00,480.3 891.35,475.0 891.70,481.4 892.05,474.4 892.40,478.0 892.75,473.2 893.10,477.1 893.45,472.7 893.80,475.1 894.15,471.4 894.50,477.3 894.85,473.3 895.20,477.7 895.55,476.1 895.90,481.1 896.25,475.6 896.60,481.7 896.95,477.8 897.30,483.0 897.65,477.3 898.00,484.8 898.35,478.9 898.70,484.8 899.05,481.0 899.40,485.7 899.75,479.7 900.10,482.6 900.45,478.0 900.80,480.5 901.15,476.1 901.50,480.0 901.85,472.0 902.20,476.5 902.55,470.5 902.90,476.0 903.25,468.4 903.60,474.0 903.95,468.7 904.30,471.8 904.65,466.7 905.00,469.4 905.35,465.5 905.70,466.6 906.05,463.4 906.40,470.1 906.75,466.9 907.10,472.8 907.45,470.5 907.80,475.0 908.15,470.4 908.50,475.2 908.85,470.1 909.20,474.6 909.55,469.0 909.90,471.8 910.25,468.4 910.60,469.4 910.95,465.8 911.30,469.2 911.65,462.3 912.00,467.6 912.35,461.6 912.70,465.0 913.05,458.7 913.40,464.5 913.75,460.3 914.10,465.2 914.45,461.9 914.80,467.2 915.15,464.2 915.50,470.2 915.85,466.9 916.20,472.8 916.55,468.9 916.90,474.3 917.25,467.7 917.60,475.7 917.95,471.1 918.30,477.2 918.65,472.2 919.00,479.6 919.35,473.6 919.70,478.4 920.05,475.8 920.40,479.6 920.75,476.4 921.10,479.6 921.45,476.4 921.80,481.8 922.15,477.8 922.50,480.2 922.85,477.6 923.20,480.0 923.55,476.5 923.90,478.9 924.25,476.5 924.60,480.9 924.95,475.9 925.30,479.0 925.65,476.0 926.00,478.5 926.35,476.8 926.70,479.8 927.05,476.6 927.40,480.1 927.75,476.6 928.10,480.7 928.45,474.1 928.80,480.8 929.15,474.3 929.50,479.6 929.85,473.2 930.20,477.3 930.55,475.2 930.90,477.3 931.25,471.4 931.60,477.0 931.95,472.1 932.30,475.6 932.65,471.4 933.00,476.6 933.35,470.7 933.70,473.5 934.05,470.7 934.40,474.0 934.75,470.8 935.10,472.1 935.45,468.1 935.80,471.3 936.15,468.8 936.50,472.6 936.85,467.5 937.20,472.9 937.55,471.3 937.90,476.5 938.25,470.8 938.60,477.4 938.95,472.2 939.30,478.6 939.65,474.5 940.00,475.5 940.35,470.1 940.70,474.4 941.05,469.4 941.40,474.2 941.75,468.1 942.10,470.4 942.45,466.3 942.80,470.1 943.15,465.6 943.50,468.4 943.85,463.0 944.20,465.4 944.55,462.0 944.90,464.3 945.25,460.0 945.60,462.6 945.95,458.6 946.30,461.9 946.65,457.8 947.00,459.5 947.35,454.8 947.70,459.1 948.05,452.0 948.40,458.5 948.75,454.3 949.10,461.6 949.45,454.8 949.80,461.9 950.15,458.3 950.50,465.2 950.85,460.6 951.20,466.7 951.55,463.1 951.90,466.4 952.25,464.6 952.60,469.4 952.95,464.8 953.30,467.4 953.65,464.8 954.00,466.0 954.35,461.2 954.70,467.5 955.05,460.6 955.40,466.0 955.75,460.4 956.10,464.5 956.45,459.0 956.80,463.4 957.15,457.5 957.50,461.8 957.85,458.2 958.20,463.8 958.55,458.4 958.90,464.3 959.25,458.4 959.60,463.6 959.95,460.0 960.30,463.1 960.65,460.7 961.00,466.6 961.35,462.3 961.70,467.1 962.05,460.3 962.40,467.1 962.75,463.1 963.10,467.9 963.45,461.0 963.80,466.8 964.15,464.3 964.50,466.8 964.85,464.5 965.20,467.7 965.55,465.4 965.90,467.1 966.25,463.6 966.60,468.0 966.95,460.7 967.30,464.7 967.65,460.1 968.00,466.9 968.35,459.1 968.70,464.7 969.05,460.2 969.40,462.9 969.75,459.7 970.10,462.2 970.45,458.9 970.80,461.9 971.15,458.7 971.50,460.2 971.85,456.7 972.20,459.0 972.55,454.5 972.90,460.4 973.25,455.8 973.60,461.3 973.95,455.2 974.30,463.1 974.65,459.3 975.00,464.3 975.35,459.6 975.70,466.9 976.05,462.5 976.40,466.7 976.75,464.2 977.10,467.8 977.45,464.5 977.80,471.7 978.15,467.4 978.50,473.1 978.85,467.8 979.20,473.1 979.55,469.7 979.90,475.8 980.25,472.8 980.60,478.0 980.95,475.2 981.30,479.6 981.65,476.2 982.00,479.3 982.35,475.1 982.70,475.7 983.05,472.1 983.40,474.8 983.75,470.4 984.10,470.6 984.45,465.1 984.80,467.9 985.15,465.1 985.50,466.4 985.85,460.5 986.20,464.8 986.55,458.3 986.90,461.4 987.25,457.3 987.60,461.0 987.95,458.5 988.30,466.0 988.65,459.8 989.00,466.4 989.35,463.9 989.70,468.6 990.05,465.3 990.40,472.4 990.75,469.3 991.10,471.8 991.45,466.0 991.80,471.2 992.15,466.6 992.50,468.7 992.85,464.0 993.20,468.0 993.55,460.9 993.90,466.5 994.25,461.4 994.60,462.3 994.95,457.8 995.30,462.6 995.65,457.9 996.00,460.2 996.35,453.8 996.70,459.8 997.05,452.9 997.40,458.4 997.75,453.6 998.10,458.0 998.45,452.0 998.80,456.0 999.15,451.2 999.50,455.7 999.85,449.7 1000.20,454.7 1000.55,449.7 1000.90,456.0 1001.25,449.0 1001.60,454.6 1001.95,448.0 1002.30,451.9 1002.65,449.0 1003.00,454.3 1003.35,447.8 1003.70,451.5 1004.05,448.0 1004.40,450.6 1004.75,448.1 1005.10,451.3 1005.45,447.4 1005.80,451.6 1006.15,449.1 1006.50,452.1 1006.85,450.1 1007.20,454.2 1007.55,453.8 1007.90,459.6 1008.25,453.3 1008.60,460.9 1008.95,456.4 1009.30,461.6 1009.65,461.1 1010.00,464.4 1010.35,462.0 1010.70,468.5 1011.05,464.3 1011.40,467.8 1011.75,464.8 1012.10,466.3 1012.45,462.8 1012.80,465.9 1013.15,462.1 1013.50,466.3 1013.85,461.8 1014.20,466.7 1014.55,460.1 1014.90,465.9 1015.25,459.6 1015.60,463.9 1015.95,457.1 1016.30,462.4 1016.65,457.3 1017.00,463.0 1017.35,458.1 1017.70,460.9 1018.05,456.9 1018.40,459.3 1018.75,456.3 1019.10,459.1 1019.45,453.9 1019.80,460.5 1020.15,455.7 1020.50,458.6 1020.85,452.7 1021.20,456.5 1021.55,451.3 1021.90,456.0 1022.25,452.8 1022.60,454.0 1022.95,450.0 1023.30,456.2 1023.65,449.5 1024.00,455.3 1024.35,449.8 1024.70,451.9 1025.05,446.8 1025.40,451.5 1025.75,446.7 1026.10,453.2 1026.45,449.7 1026.80,455.7 1027.15,451.0 1027.50,458.7 1027.85,452.4 1028.20,459.9 1028.55,456.3 1028.90,461.7 1029.25,458.7 1029.60,464.9 1029.95,459.5 1030.30,464.5 1030.65,459.1 1031.00,464.5 1031.35,456.6 1031.70,463.3 1032.05,456.3 1032.40,458.6 1032.75,455.5 1033.10,456.3 1033.45,453.6 1033.80,456.8 1034.15,452.2 1034.50,453.9 1034.85,448.0 1035.20,451.1 1035.55,446.3 1035.90,450.7 1036.25,444.6 1036.60,447.0 1036.95,444.1 1037.30,447.9 1037.65,446.6 1038.00,451.0 1038.35,444.5 1038.70,451.8 1039.05,447.6 1039.40,450.4 1039.75,447.9 1040.10,451.1 1040.45,448.7 1040.80,452.4 1041.15,447.0 1041.50,454.4 1041.85,447.7 1042.20,453.4 1042.55,449.7 1042.90,453.5 1043.25,449.5 1043.60,455.2 1043.95,450.9 1044.30,455.6 1044.65,452.3 1045.00,454.4 1045.35,450.7 1045.70,455.4 1046.05,451.1 1046.40,458.5 1046.75,453.9 1047.10,456.9 1047.45,452.9 1047.80,456.4 1048.15,453.5 1048.50,456.2 1048.85,452.2 1049.20,455.2 1049.55,451.0 1049.90,454.4 1050.25,447.9 1050.60,451.7 1050.95,446.4 1051.30,452.5 1051.65,446.3 1052.00,451.3 1052.35,446.5 1052.70,448.3 1053.05,444.1 1053.40,448.3 1053.75,442.4 1054.10,446.7 1054.45,441.8 1054.80,447.3 1055.15,440.8 1055.50,445.9 1055.85,441.3 1056.20,446.0 1056.55,440.1 1056.90,442.7 1057.25,437.2 1057.60,443.8 1057.95,437.5 1058.30,439.7 1058.65,436.1 1059.00,441.5 1059.35,433.8 1059.70,438.7 1060.05,434.4 1060.40,441.2 1060.75,435.1 1061.10,442.3 1061.45,436.6 1061.80,441.9 1062.15,438.3 1062.50,443.5 1062.85,439.7 1063.20,444.1 1063.55,441.1 1063.90,444.0 1064.25,442.2 1064.60,444.1 1064.95,442.9 1065.30,445.0 1065.65,443.5 1066.00,445.6 1066.35,440.4 1066.70,445.7 1067.05,442.0 1067.40,443.4 1067.75,438.4 1068.10,443.8 1068.45,438.9 1068.80,440.6 1069.15,437.6 1069.50,440.5 1069.85,436.7 1070.20,441.5 1070.55,433.8 1070.90,439.7 1071.25,433.5 1071.60,438.8 1071.95,431.4 1072.30,436.8 1072.65,431.8 1073.00,434.7 1073.35,430.3 1073.70,434.2 1074.05,432.7 1074.40,438.2 1074.75,434.9 1075.10,438.4 1075.45,434.2 1075.80,441.7 1076.15,437.2 1076.50,441.5 1076.85,440.8 1077.20,443.4 1077.55,442.5 1077.90,445.7 1078.25,444.6 1078.60,447.4 1078.95,443.8 1079.30,452.2 1079.65,446.6 1080.00,453.4 1080.35,449.8 1080.70,454.4 1081.05,451.5 1081.40,456.6 1081.75,451.7 1082.10,453.9 1082.45,450.7 1082.80,453.7 1083.15,446.5 1083.50,452.3 1083.85,447.8 1084.20,449.5 1084.55,444.8 1084.90,449.2 1085.25,444.2 1085.60,445.9 1085.95,443.6 1086.30,445.3 1086.65,440.7 1087.00,445.5 1087.35,438.6 1087.70,444.9 1088.05,440.4 1088.40,445.1 1088.75,440.5 1089.10,443.2 1089.45,440.3 1089.80,443.2 1090.15,439.8 1090.50,444.6 1090.85,440.5 1091.20,443.0 1091.55,439.1 1091.90,443.7 1092.25,437.9 1092.60,442.4 1092.95,440.8 1093.30,443.9 1093.65,440.7 1094.00,444.7 1094.35,439.6 1094.70,444.0 1095.05,439.1 1095.40,444.2 1095.75,438.7 1096.10,441.7 1096.45,436.9 1096.80,440.1 1097.15,436.9 1097.50,440.6 1097.85,435.6 1098.20,439.8 1098.55,433.2 1098.90,438.8 1099.25,432.6 1099.60,436.3 1099.95,432.0 1100.30,436.3 1100.65,429.3 1101.00,435.8 1101.35,429.0 1101.70,434.2 1102.05,430.0 1102.40,432.0 1102.75,425.8 1103.10,432.6 1103.45,427.4 1103.80,434.5 1104.15,430.0 1104.50,433.0 1104.85,430.2 1105.20,435.6 1105.55,432.3 1105.90,435.8 1106.25,434.2 1106.60,439.3 1106.95,433.1 1107.30,438.2 1107.65,435.6 1108.00,440.3 1108.35,436.8 1108.70,441.4 1109.05,437.1 1109.40,443.2 1109.75,439.3 1110.10,444.7 1110.45,440.5 1110.80,446.8 1111.15,443.0 1111.50,445.9 1111.85,445.4 1112.20,448.1 1112.55,444.2 1112.90,450.3 1113.25,446.4 1113.60,449.9 1113.95,446.9 1114.30,449.5 1114.65,443.0 1115.00,447.6 1115.35,441.5 1115.70,445.0 1116.05,440.0 1116.40,441.5 1116.75,435.4 1117.10,440.2 1117.45,431.8 1117.80,437.2 1118.15,430.0 1118.50,434.3 1118.85,429.7 1119.20,433.2 1119.55,427.5 1119.90,432.6 1120.25,429.1 1120.60,433.4 1120.95,427.5 1121.30,431.5 1121.65,425.4 1122.00,429.5 1122.35,427.5 1122.70,430.5 1123.05,427.0 1123.40,430.9 1123.75,423.2 1124.10,428.2 1124.45,422.9 1124.80,428.1 1125.15,423.2 1125.50,427.3 1125.85,421.4 1126.20,426.2 1126.55,420.6 1126.90,425.6 1127.25,422.1 1127.60,427.1 1127.95,422.4 1128.30,424.4 1128.65,420.9 1129.00,427.2 1129.35,420.2 1129.70,426.7 1130.05,423.2 1130.40,424.7 1130.75,420.7 1131.10,427.3 1131.45,420.3 1131.80,426.0 1132.15,421.9 1132.50,425.9 1132.85,423.6 1133.20,427.4 1133.55,421.8 1133.90,426.0 1134.25,424.4 1134.60,432.1 1134.95,427.3 1135.30,433.7 1135.65,433.3 1136.00,437.0 1136.35,436.3 1136.70,440.9 1137.05,437.7 1137.40,441.4 1137.75,437.5 1138.10,439.6 1138.45,436.0 1138.80,440.1 1139.15,432.8 1139.50,439.1 1139.85,432.9 1140.20,437.4 1140.55,432.3 1140.90,434.7 1141.25,430.4 1141.60,433.2 1141.95,429.8 1142.30,434.0 1142.65,427.7 1143.00,432.1 1143.35,427.2 1143.70,430.8 1144.05,424.4 1144.40,430.2 1144.75,425.0 1145.10,430.7 1145.45,424.0 1145.80,428.9 1146.15,426.3 1146.50,430.5 1146.85,425.2 1147.20,432.4 1147.55,429.0 1147.90,432.7 1148.25,427.8 1148.60,432.1 1148.95,428.8 1149.30,435.1 1149.65,429.6 1150.00,434.2 1150.35,429.8 1150.70,435.9" fill="none" stroke="#1e70ae" stroke-width="3.4" stroke-linejoin="round" stroke-linecap="round"/>
 </g>
 <line x1="244.6" y1="228" x2="244.6" y2="664" stroke="#0000ff" stroke-width="3" stroke-dasharray="9.5 4.3" stroke-dashoffset="2.5"/>
 <line x1="1151.4" y1="228" x2="1151.4" y2="664" stroke="#b01e24" stroke-width="3" stroke-dasharray="9.5 4.3" stroke-dashoffset="2.5"/>
 <rect x="199.1" y="227.7" width="998" height="437" fill="none" stroke="#000" stroke-width="1.5"/>
 <g stroke="#000" stroke-width="1.3">
  <path d="M192,251.4 H199 M192,302.4 H199 M192,353.4 H199 M192,404.3 H199 M192,455.3 H199 M192,506.3 H199 M192,557.3 H199 M192,608.3 H199 M192,659.2 H199"/>
  <path d="M245,664.5 V671 M426,664.5 V671 M607,664.5 V671 M788,664.5 V671 M969,664.5 V671 M1150.5,664.5 V671"/>
 </g>
</svg>
<div class="t tick yt" style="right:1170.6px;top:243.9px">0.875</div>
<div class="t tick yt" style="right:1170.6px;top:294.9px">0.850</div>
<div class="t tick yt" style="right:1170.6px;top:345.9px">0.825</div>
<div class="t tick yt" style="right:1170.6px;top:396.8px">0.800</div>
<div class="t tick yt" style="right:1170.6px;top:447.8px">0.775</div>
<div class="t tick yt" style="right:1170.6px;top:498.8px">0.750</div>
<div class="t tick yt" style="right:1170.6px;top:549.8px">0.725</div>
<div class="t tick yt" style="right:1170.6px;top:600.8px">0.700</div>
<div class="t tick yt" style="right:1170.6px;top:651.7px">0.675</div>
<div class="t tick xt" style="left:245.6px;top:676px">0</div>
<div class="t tick xt" style="left:426.6px;top:676px">1000</div>
<div class="t tick xt" style="left:607.5px;top:676px">2000</div>
<div class="t tick xt" style="left:788.5px;top:676px">3000</div>
<div class="t tick xt" style="left:969.5px;top:676px">4000</div>
<div class="t tick xt" style="left:1150.5px;top:676px">5000</div>

<!-- controls -->
<div class="t lab" style="left:22.3px;top:768px">File index:</div>
<div class="trackd" style="left:107px;top:773px;width:215px"></div>
<div class="track" style="left:318px;top:773px;width:822px"></div>
<div class="knob" style="left:309.5px;top:765px"></div>
<div class="t lab" style="left:1151.5px;top:768px">2</div>
<div class="abs" style="left:1222.5px;top:766px;width:16px;height:16px;background:#fff;border:1px solid #b9b9b9;border-radius:3px"></div>
<svg class="abs" style="left:1222px;top:766px" width="17" height="17"><path d="M4,8.5 L7,12.5 L12.5,3.5" fill="none" stroke="#2a2a2a" stroke-width="1.6"/></svg>
<div class="t lab" style="left:1244px;top:768px">Use this file</div>

<div class="t" style="left:31px;top:801px;font-size:14.9px;color:#1c1c1c">Data range to use</div>
<div class="group" style="left:23px;top:817px;width:1318px;height:65px"></div>
<div class="t lab" style="left:41.5px;top:843px;color:#1f1fc8">Left</div>
<div class="track" style="left:88px;top:848px;width:388px"></div>
<div class="knob" style="left:78.5px;top:840px"></div>
<div class="trackd" style="left:874.5px;top:848px;width:390px"></div>
<div class="knob" style="left:1251.5px;top:840px"></div>
<div class="t lab" style="left:1281.5px;top:842.5px;color:#d0161e">Right</div>

<div class="t" style="left:31px;top:891px;font-size:15px;color:#1c1c1c">Bin</div>
<div class="group" style="left:23px;top:906px;width:1318px;height:112px"></div>
<div class="t lab" style="left:40.8px;top:932.5px">Size:</div>
<div class="trackd" style="left:91px;top:937px;width:1040px"></div>
<div class="track" style="left:1127px;top:937px;width:163px"></div>
<div class="knob" style="left:1117px;top:929px"></div>
<div class="t lab" style="left:1301.8px;top:932px;font-size:17px;letter-spacing:0.6px">87</div>
<div class="t lab" style="left:42px;top:976px;letter-spacing:0.5px">Type:</div>
<div class="abs" style="left:95px;top:975px;width:19px;height:19px;border-radius:50%;background:#fff;border:1px solid #b9b9b9"></div>
<div class="abs" style="left:101.5px;top:981.5px;width:6px;height:6px;border-radius:50%;background:#3a3a3a"></div>
<div class="t lab" style="left:119px;top:976px;letter-spacing:0.7px">Mean</div>
<div class="abs" style="left:181.5px;top:975px;width:19px;height:19px;border-radius:50%;background:#fff;border:1px solid #b9b9b9"></div>
<div class="t lab" style="left:205.5px;top:976px;letter-spacing:0.5px">Median</div>

<div id="status" class="abs"></div>
<div id="botstripe" class="abs"><div class="abs" style="left:0;top:0;width:84px;height:1px;background:#111"></div><div class="abs" style="left:84px;top:0;width:108px;height:1px;background:#c9c9c9"></div></div>
</body></html>
